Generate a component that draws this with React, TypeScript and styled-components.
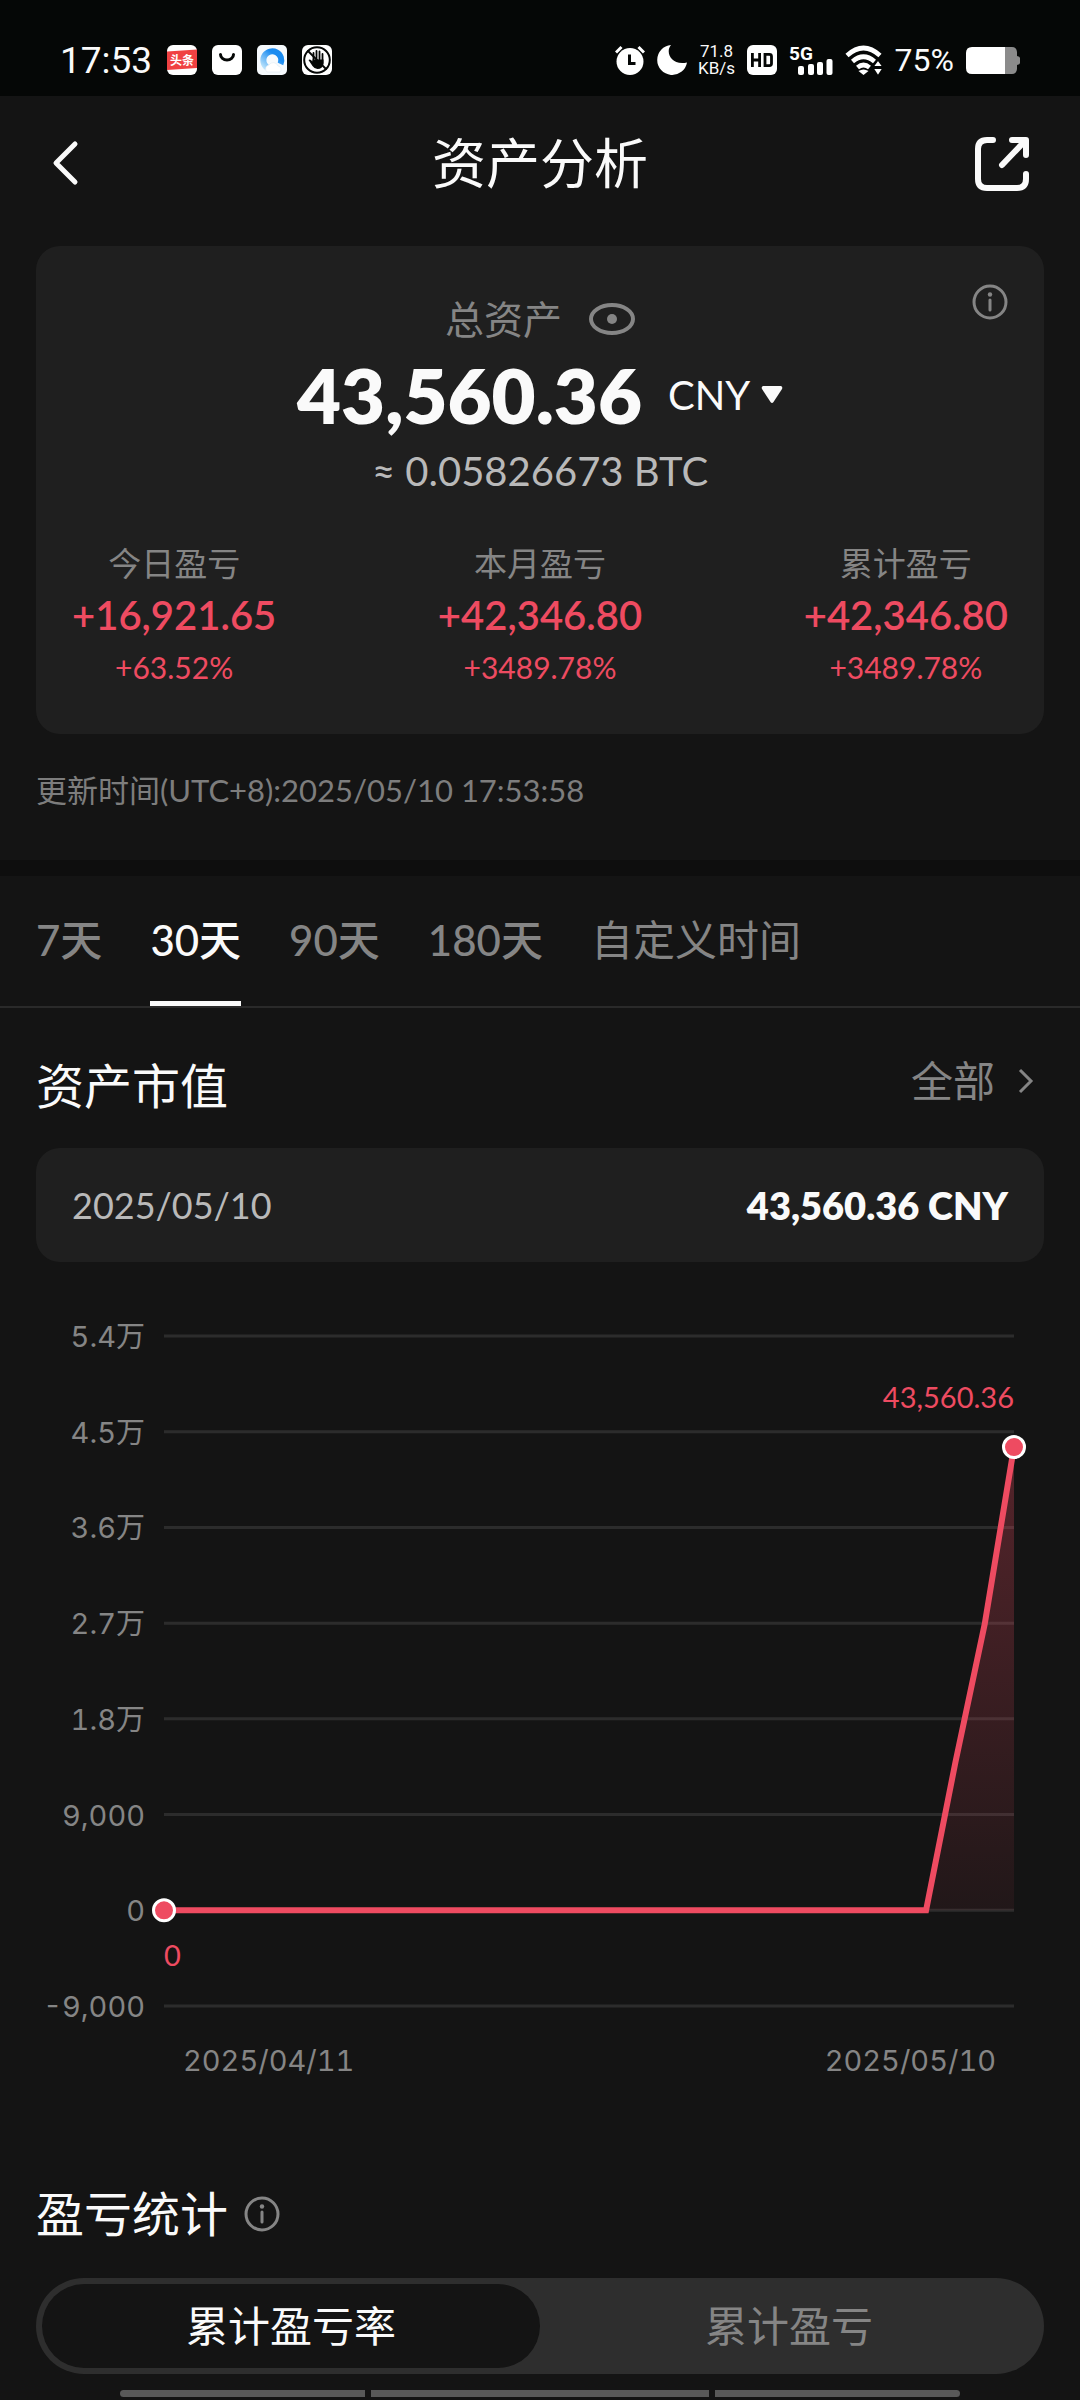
import React from "react";
import styled, { createGlobalStyle } from "styled-components";

const GlobalStyle = createGlobalStyle`
  * { box-sizing: border-box; margin: 0; }
  body {
    margin: 0;
    background: #141414;
    color: #fafafa;
    font-family: Lato, "Noto Sans CJK SC", sans-serif;
    -webkit-font-smoothing: antialiased;
  }
  button, select {
    font: inherit;
    color: inherit;
    background: none;
    border: 0;
    padding: 0;
  }
`;

const RED = "#ee4b61";

const Page = styled.div`
  display: flex;
  flex-direction: column;
  min-height: 100vh;
`;

/* ---------- status bar ---------- */

const StatusBar = styled.div`
  display: flex;
  justify-content: space-between;
  align-items: center;
  height: 96px;
  padding: 24px 60px 0;
  background: #050706;
  font-family: Roboto, sans-serif;
  line-height: 1;
`;
const StatusGroup = styled.div<{ $gap: number }>`
  display: flex;
  align-items: center;
  gap: ${(p) => p.$gap}px;
`;
const Clock = styled.time`
  font-size: 37px;
`;
const NetSpeed = styled.div`
  display: flex;
  flex-direction: column;
  align-items: center;
  width: 36px;
  font-size: 17px;
  line-height: 17px;
`;
const Percent = styled.span`
  font-size: 32px;
`;

/* ---------- header ---------- */

const Header = styled.header`
  display: grid;
  grid-template-columns: 60px 1fr 60px;
  align-items: center;
  height: 150px;
  padding: 0 48px 14px;
`;
const Title = styled.h1`
  font-size: 54px;
  font-weight: 400;
  line-height: 64px;
  text-align: center;
`;
const IconButton = styled.button`
  display: flex;
  align-items: center;
`;

/* ---------- summary card ---------- */

const Card = styled.section`
  position: relative;
  margin: 0 36px;
  padding: 47px 36px 41px;
  border-radius: 24px;
  background: #1f1f1f;
`;
const CardInfo = styled(IconButton)`
  position: absolute;
  top: 38px;
  right: 36px;
`;
const Row = styled.div<{ $gap: number }>`
  display: flex;
  justify-content: center;
  align-items: center;
  gap: ${(p) => p.$gap}px;
`;
const TotalLabel = styled.h2`
  font-size: 39px;
  font-weight: 400;
  line-height: 52px;
  color: #858585;
`;
const Total = styled.strong`
  font-size: 76px;
  font-weight: 800;
  line-height: 100px;
`;
const CurrencyField = styled.label`
  display: flex;
  align-items: center;
  gap: 10px;
`;
const CurrencySelect = styled.select`
  appearance: none;
  font-size: 40px;
  line-height: 52px;
`;
const BtcValue = styled.p`
  font-size: 40px;
  line-height: 52px;
  text-align: center;
  color: #b9b9b9;
`;
const Stats = styled.div`
  display: flex;
  justify-content: space-between;
  margin-top: 40px;
`;
const Stat = styled.div`
  display: flex;
  flex-direction: column;
  align-items: center;
  color: ${RED};
`;
const StatLabel = styled.span`
  font-size: 33px;
  line-height: 52px;
  color: #858585;
`;
const StatValue = styled.span`
  font-size: 40px;
  font-weight: 600;
  line-height: 52px;
`;
const StatRate = styled.span`
  font-size: 30px;
  line-height: 52px;
`;
const Updated = styled.p`
  padding: 35px 36px 49px;
  font-size: 31px;
  line-height: 42px;
  color: #7d7d7d;
`;
const Divider = styled.hr`
  height: 16px;
  border: 0;
  background: #0e0e0e;
`;

/* ---------- range tabs ---------- */

const Tabs = styled.nav`
  display: flex;
  gap: 48px;
  padding: 0 36px;
  border-bottom: 2px solid #2a2a2a;
`;
const Tab = styled.button<{ $active?: boolean; $light?: boolean }>`
  padding: 37px 0 34px;
  font-size: 42px;
  font-weight: ${(p) => (p.$light ? 400 : 500)};
  line-height: 54px;
  color: ${(p) => (p.$active ? "#fafafa" : "#858585")};
  border-bottom: 5px solid ${(p) => (p.$active ? "#fafafa" : "transparent")};
`;

/* ---------- asset value ---------- */

const SectionHead = styled.div<{ $between?: boolean }>`
  display: flex;
  align-items: ${(p) => (p.$between ? "flex-start" : "center")};
  justify-content: ${(p) => (p.$between ? "space-between" : "flex-start")};
  gap: 16px;
  padding: 0 36px;
`;
const SectionTitle = styled.h2`
  font-size: 48px;
  font-weight: 400;
  line-height: 60px;
`;
const AllLink = styled.button`
  display: flex;
  align-items: center;
  gap: 22px;
  padding-right: 9px;
  font-size: 42px;
  line-height: 50px;
  color: #858585;
`;
const DayBar = styled.div`
  display: flex;
  justify-content: space-between;
  align-items: center;
  height: 114px;
  margin: 0 36px;
  padding: 0 36px;
  border-radius: 24px;
  background: #1f1f1f;
  font-size: 36px;
`;
const Day = styled.span`
  color: #b9b9b9;
`;
const DayValue = styled.strong`
  font-size: 38px;
  font-weight: 800;
`;

const ChartFigure = styled.figure`
  margin: 25px 0 0;
  svg { display: block; width: 100%; height: auto; }
`;
const AxisText = styled.g`
  font-size: 29px;
  font-variant-numeric: tabular-nums;
  fill: #858585;
`;

/* ---------- profit statistics ---------- */

const Segmented = styled.div`
  display: grid;
  grid-template-columns: 1fr 1fr;
  margin: 0 36px;
  padding: 6px;
  border-radius: 48px;
  background: #2e2e2e;
`;
const Segment = styled.button<{ $active?: boolean }>`
  height: 84px;
  border-radius: 42px;
  font-size: 42px;
  line-height: 60px;
  color: ${(p) => (p.$active ? "#fafafa" : "#858585")};
  background: ${(p) => (p.$active ? "#141414" : "transparent")};
`;
const HomeBar = styled.div`
  display: grid;
  grid-template-columns: 245fr 338fr 245fr;
  gap: 6px;
  margin: 16px 120px 3px;
  border-radius: 4px;
  overflow: hidden;
`;
const HomePiece = styled.span`
  height: 7px;
  background: #595959;
`;
const Spacer = styled.div<{ $h: number }>`
  height: ${(p) => p.$h}px;
`;

/* ---------- icons ---------- */

const InfoIcon = () => (
  <svg width="36" height="36" viewBox="0 0 36 36" fill="none" stroke="#858585" strokeWidth="3">
    <circle cx="18" cy="18" r="16" />
    <path d="M18 16v10" strokeLinecap="round" />
    <circle cx="18" cy="10.5" r="2.2" fill="#858585" stroke="none" />
  </svg>
);

const NewsIcon = () => (
  <svg width="30" height="30" viewBox="0 0 30 30">
    <rect width="30" height="30" rx="6" fill="#fff" />
    <path d="M0 6.500 30 4.500V23L0 25Z" fill="#f04142" />
    <text x="15" y="19.500" fontSize="12" fontWeight="700" textAnchor="middle" fill="#fff" fontFamily='"Noto Sans CJK SC", sans-serif'>头条</text>
  </svg>
);
const BagIcon = () => (
  <svg width="30" height="30" viewBox="0 0 30 30">
    <rect width="30" height="30" rx="6" fill="#fff" />
    <path d="M8.500 9.500a6.500 5.500 0 0 0 13 0" fill="none" stroke="#050706" strokeWidth="3" strokeLinecap="round" />
  </svg>
);
const BrowserIcon = () => (
  <svg width="30" height="30" viewBox="0 0 30 30">
    <defs>
      <linearGradient id="ring" x1="1" y1="0" x2="0" y2="1">
        <stop offset="0.3" stopColor="#1a8bf0" />
        <stop offset="1" stopColor="#b9e2fb" />
      </linearGradient>
    </defs>
    <rect width="30" height="30" rx="5" fill="#f6fafd" />
    <path d="M10 22.500A9 9 0 1 1 23.500 19" fill="none" stroke="url(#ring)" strokeWidth="6" />
    <path d="M10 27a4 4 0 0 1 2-7 5 5 0 0 1 9 1 3.500 3.500 0 0 1 2 6Z" fill="#fff" stroke="#dfe9f2" strokeWidth="0.600" />
  </svg>
);
const HandIcon = () => (
  <svg width="30" height="30" viewBox="0 0 30 30" fill="none" strokeLinecap="round">
    <rect width="30" height="30" rx="6" fill="#fff" />
    <circle cx="15" cy="15" r="12.800" stroke="#050706" strokeWidth="2" />
    <path d="M11.500 8v9M14.500 6v10M17.500 6.500v10M20.500 9v9" stroke="#050706" strokeWidth="1.800" />
    <path d="M10.500 14.500h11V19q-1 5-6 5-3 0-5-3L6.500 15q1.500-1.500 4 1.500Z" fill="#050706" />
    <path d="m6 6 18 18" stroke="#050706" strokeWidth="1.800" />
  </svg>
);
const AlarmIcon = () => (
  <svg width="30" height="30" viewBox="0 0 30 30" fill="none">
    <circle cx="15" cy="16.500" r="13.500" fill="#fff" />
    <path d="M1 7.500 6.500 2M29 7.500 23.500 2" stroke="#fff" strokeWidth="3" />
    <path d="M14.500 9.500v9h6" stroke="#050706" strokeWidth="3" />
  </svg>
);
const MoonIcon = () => (
  <svg width="30" height="30" viewBox="0 0 30 30">
    <path d="M14 0C8 7 14 21 30 17.500A15 15 0 1 1 14 0Z" fill="#fff" />
  </svg>
);
const HdIcon = () => (
  <svg width="30" height="30" viewBox="0 0 30 30" fill="none" stroke="#050706" strokeWidth="2.800">
    <rect width="30" height="30" rx="6" fill="#fff" stroke="none" />
    <path d="M5.400 8v14M12.600 8v14M5.400 15h7.200M18 9.400h4.500q2 0 2 2v7.200q0 2-2 2H18Z" />
  </svg>
);
const SignalIcon = () => (
  <svg width="44" height="30" viewBox="0 0 44 30" fill="#fff" overflow="visible">
    <text x="0" y="15" fontSize="19" fontWeight="700" fontFamily="Roboto, sans-serif">5G</text>
    <rect x="9" y="21" width="6" height="9" rx="2" />
    <rect x="19" y="19" width="6" height="11" rx="2" />
    <rect x="28" y="17" width="6" height="13" rx="2" />
    <rect x="37.500" y="14" width="6" height="16" rx="2" />
  </svg>
);
const WifiIcon = () => (
  <svg width="38" height="30" viewBox="0 0 38 30" fill="none" stroke="#fff" strokeWidth="4.600">
    <path d="M2 10.500q16.500-15 33 0M7.500 16.500q11-9.500 22 0M12.500 22.500q6-5 12 0" />
    <path d="m13.500 26 5 4 5-4q-5-3-10 0Z" fill="#fff" stroke="none" />
    <path d="M33 14.500 38.500 22H27.500ZM33 31.500 38.500 23H27.500Z" fill="#fff" stroke="#050706" strokeWidth="2" />
  </svg>
);
const BatteryIcon = () => (
  <svg width="54" height="27" viewBox="0 0 54 27">
    <path d="M38 0h8q4.500 0 5 5v4q3 .5 3 2v5q0 1.500-3 2v4q-.5 5-5 5h-8Z" fill="#8b8b8b" />
    <path d="M6 0h33v27H6q-6 0-6-6V6q0-6 6-6Z" fill="#fff" />
  </svg>
);

/* ---------- chart ---------- */

const LEFT = 164;
const RIGHT = 1014;
const TOP = 49;
const BOTTOM = 719;
const LABELS = ["5.4万", "4.5万", "3.6万", "2.7万", "1.8万", "9,000", "0", "-9,000"];
const STEP = (BOTTOM - TOP) / (LABELS.length - 1);
const VALUES = [...Array(27).fill(0), 13900, 26900, 43560.36];

const toX = (i: number) => LEFT + ((RIGHT - LEFT) * i) / (VALUES.length - 1);
const toY = (v: number) => TOP + STEP * (6 - v / 9000);

function AssetChart() {
  const points = VALUES.map((v, i) => `${toX(i)},${toY(v)}`).join(" ");
  const lastY = toY(VALUES[VALUES.length - 1]);
  return (
    <ChartFigure>
      <svg viewBox="0 0 1080 810" fontFamily='Inter, "Noto Sans CJK SC", sans-serif' role="img" aria-label="资产市值">
        <defs>
          <linearGradient id="area" x1="0" y1="0" x2="0" y2="1">
            <stop offset="0" stopColor={RED} stopOpacity="0.3" />
            <stop offset="1" stopColor={RED} stopOpacity="0.06" />
          </linearGradient>
        </defs>
        {LABELS.map((label, i) => (
          <AxisText key={label}>
            <path d={`M${LEFT} ${TOP + STEP * i}H${RIGHT}`} stroke="#2c2c2c" strokeWidth="3" />
            <text x="145" y={TOP + STEP * i + 11} textAnchor="end">{label}</text>
          </AxisText>
        ))}
        <polygon points={`${points} ${RIGHT},${toY(0)} ${LEFT},${toY(0)}`} fill="url(#area)" />
        <polyline points={points} fill="none" stroke={RED} strokeWidth="6" />
        <circle cx={LEFT} cy={toY(0)} r="10.5" fill={RED} stroke="#fff" strokeWidth="3" />
        <circle cx={RIGHT} cy={lastY} r="10.5" fill={RED} stroke="#fff" strokeWidth="3" />
        <g fontFamily="Lato, sans-serif" fontSize="29" fill={RED}>
          <text x={LEFT} y="679">0</text>
          <text x={RIGHT} y="121" textAnchor="end">43,560.36</text>
        </g>
        <AxisText>
          <text x="183" y="784">2025/04/11</text>
          <text x="996" y="784" textAnchor="end">2025/05/10</text>
        </AxisText>
      </svg>
    </ChartFigure>
  );
}

const STATS = [
  { label: "今日盈亏", value: "+16,921.65", rate: "+63.52%" },
  { label: "本月盈亏", value: "+42,346.80", rate: "+3489.78%" },
  { label: "累计盈亏", value: "+42,346.80", rate: "+3489.78%" },
];

export default function App() {
  return (
    <Page>
      <GlobalStyle />
      <StatusBar>
        <StatusGroup $gap={15}>
          <Clock>17:53</Clock>
          <NewsIcon />
          <BagIcon />
          <BrowserIcon />
          <HandIcon />
        </StatusGroup>
        <StatusGroup $gap={12}>
          <AlarmIcon />
          <MoonIcon />
          <NetSpeed><span>71.8</span><span>KB/s</span></NetSpeed>
          <HdIcon />
          <SignalIcon />
          <WifiIcon />
          <Percent>75%</Percent>
          <BatteryIcon />
        </StatusGroup>
      </StatusBar>
      <Header>
        <IconButton aria-label="返回">
          <svg width="36" height="48" viewBox="0 0 36 48" fill="none" stroke="#fafafa" strokeWidth="5" strokeLinecap="round" strokeLinejoin="round">
            <path d="M27 4 8 23 27 42" />
          </svg>
        </IconButton>
        <Title>资产分析</Title>
        <IconButton aria-label="分享">
          <svg width="60" height="60" viewBox="0 0 60 60" fill="none" stroke="#fafafa" strokeWidth="6" strokeLinecap="round" strokeLinejoin="round">
            <path d="M21 6h-6q-9 0-9 9v30q0 9 9 9h30q9 0 9-9v-5M40 6h14v15M52 8 30 31" />
          </svg>
        </IconButton>
      </Header>
      <main>
        <Card>
          <CardInfo aria-label="说明"><InfoIcon /></CardInfo>
          <Row $gap={27}>
            <TotalLabel>总资产</TotalLabel>
            <IconButton aria-label="隐藏金额">
              <svg width="46" height="32" viewBox="0 0 46 32" fill="none" stroke="#858585" strokeWidth="4">
                <ellipse cx="23" cy="16" rx="21" ry="14" />
                <circle cx="23" cy="16" r="5" fill="#858585" stroke="none" />
              </svg>
            </IconButton>
          </Row>
          <Row $gap={26}>
            <Total>43,560.36</Total>
            <CurrencyField>
              <CurrencySelect aria-label="计价货币" defaultValue="CNY"><option>CNY</option></CurrencySelect>
              <svg width="22" height="18" viewBox="0 0 22 18" fill="#fafafa"><path d="M2 0h18q2 1 1 3L12.500 16q-1.500 2-3 0L1 3Q0 1 2 0Z" /></svg>
            </CurrencyField>
          </Row>
          <BtcValue>≈ 0.05826673 BTC</BtcValue>
          <Stats>
            {STATS.map((s) => (
              <Stat key={s.label}>
                <StatLabel>{s.label}</StatLabel>
                <StatValue>{s.value}</StatValue>
                <StatRate>{s.rate}</StatRate>
              </Stat>
            ))}
          </Stats>
        </Card>
        <Updated>更新时间(UTC+8):2025/05/10 17:53:58</Updated>
        <Divider />
        <Tabs>
          <Tab>7天</Tab>
          <Tab $active>30天</Tab>
          <Tab>90天</Tab>
          <Tab>180天</Tab>
          <Tab $light>自定义时间</Tab>
        </Tabs>
        <Spacer $h={48} />
        <SectionHead $between>
          <SectionTitle>资产市值</SectionTitle>
          <AllLink>
            全部
            <svg width="18" height="26" viewBox="0 0 18 26" fill="none" stroke="#858585" strokeWidth="3"><path d="m3 2 11 11L3 24" /></svg>
          </AllLink>
        </SectionHead>
        <Spacer $h={32} />
        <DayBar>
          <Day>2025/05/10</Day>
          <DayValue>43,560.36 CNY</DayValue>
        </DayBar>
        <AssetChart />
        <Spacer $h={87} />
        <SectionHead>
          <SectionTitle>盈亏统计</SectionTitle>
          <IconButton aria-label="说明"><InfoIcon /></IconButton>
        </SectionHead>
        <Spacer $h={34} />
        <Segmented>
          <Segment $active>累计盈亏率</Segment>
          <Segment>累计盈亏</Segment>
        </Segmented>
        <HomeBar><HomePiece /><HomePiece /><HomePiece /></HomeBar>
      </main>
    </Page>
  );
}
